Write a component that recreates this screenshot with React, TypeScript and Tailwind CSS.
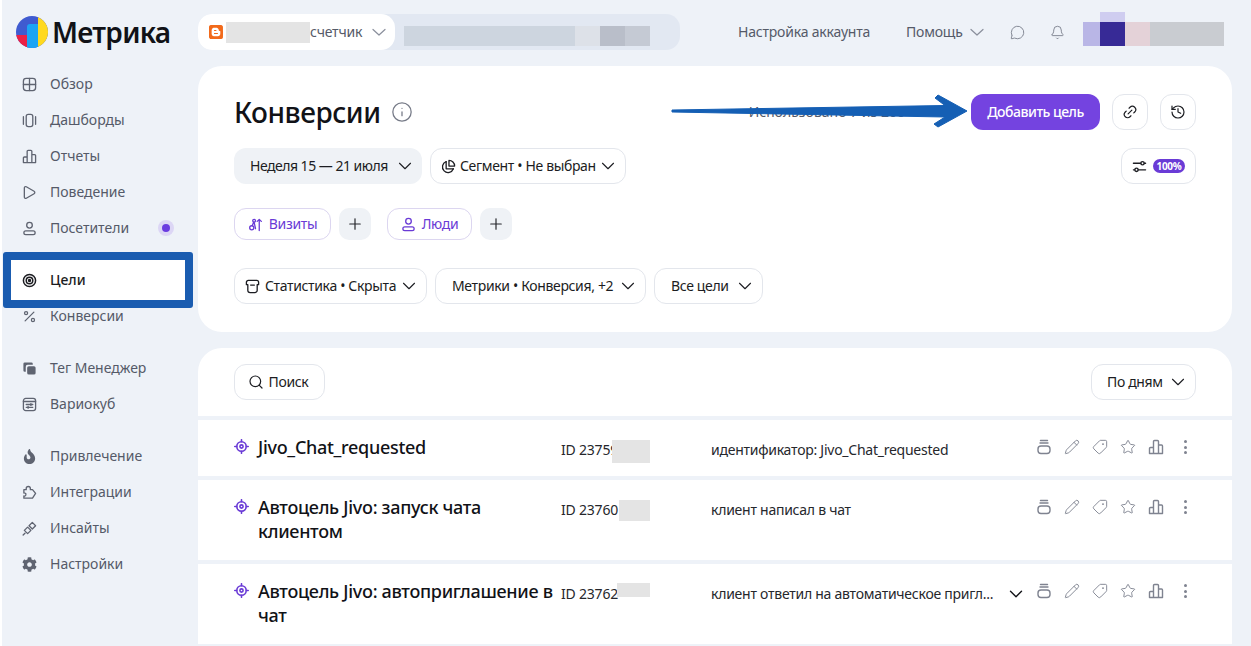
import { ChevronDown, Plus, Search, Link2, History, Bell, MessageCircle, Pencil, Tag, Star, Info, Percent } from 'lucide-react'
import { FaBlogger, FaCog, FaFire } from 'react-icons/fa'
import type { ReactNode } from 'react'

type IconProps = { className?: string }

// Small hand drawn icons that the packages do not have
const Svg = ({ className, children }: IconProps & { children: ReactNode }) => (
  <svg viewBox="0 0 16 16" fill="none" stroke="currentColor" strokeWidth={1.4} strokeLinecap="round" strokeLinejoin="round" className={className}>
    {children}
  </svg>
)

const GridIcon = ({ className }: IconProps) => (
  <Svg className={className}>
    <rect x="1.5" y="1.5" width="13" height="13" rx="3" />
    <path d="M8 1.5v13M1.5 8h13" />
  </Svg>
)
const DashIcon = ({ className }: IconProps) => (
  <Svg className={className}>
    <rect x="4.5" y="1.5" width="7" height="13" rx="2.2" />
    <path d="M1.5 4v8M14.5 4v8" />
  </Svg>
)
const BarsIcon = ({ className }: IconProps) => (
  <Svg className={className}>
    <path d="M1.5 14.5V9.5a1 1 0 0 1 1-1h3v6zM5.5 14.5V2.5a1 1 0 0 1 1-1h3a1 1 0 0 1 1 1v12zM10.500 14.500V6h3a1 1 0 0 1 1 1v7.500zM1.500 14.500h13" />
  </Svg>
)
const PlayIcon = ({ className }: IconProps) => (
  <Svg className={className}>
    <path d="M2.500 3.200c0-1.200 1-1.900 2.100-1.300l8.300 4.800c1 .6 1 2 0 2.600l-8.300 4.800c-1.100.6-2.100-.1-2.100-1.300z" />
  </Svg>
)
const PersonIcon = ({ className }: IconProps) => (
  <Svg className={className}>
    <circle cx="8" cy="4.500" r="3" />
    <rect x="2" y="10.500" width="12" height="4" rx="2" />
  </Svg>
)
const GoalIcon = ({ className }: IconProps) => (
  <svg viewBox="0 0 16 16" fill="none" stroke="currentColor" strokeWidth={1.6} className={className}>
    <circle cx="8" cy="8" r="6.500" />
    <circle cx="8" cy="8" r="3.500" />
    <circle cx="8" cy="8" r="1" fill="currentColor" />
  </svg>
)
const TagManagerIcon = ({ className }: IconProps) => (
  <svg viewBox="0 0 16 16" className={className} fill="currentColor">
    <path d="M3 1.500h7a1.500 1.500 0 0 1 1.500 1.500v1H6a2 2 0 0 0-2 2v5.500H3A1.500 1.500 0 0 1 1.500 10V3A1.500 1.500 0 0 1 3 1.500z" />
    <rect x="5.500" y="5.500" width="9" height="9" rx="1.800" />
  </svg>
)
const VarioIcon = ({ className }: IconProps) => (
  <Svg className={className}>
    <rect x="1.500" y="1.500" width="13" height="13" rx="2.500" />
    <path d="M1.500 4.800h13M4.500 8h7M4.500 11h7" />
    <path d="M9.500 7v2M6.500 10v2" />
  </Svg>
)
const PuzzleIcon = ({ className }: IconProps) => (
  <Svg className={className}>
    <path d="M4.500 5V3.800a2.200 2.200 0 0 1 4.400 0V5h2.300l3.300 4-3.300 5H2v-2.300a1.600 1.600 0 0 0 1.200-3 1.600 1.600 0 0 0-1.200-.2V5z" />
  </Svg>
)
const InsightIcon = ({ className }: IconProps) => (
  <Svg className={className}>
    <path d="M11 1.500l3.500 3.500L11 8.500 7.500 5zM6 6.500l3.500 3.500L6 13.500 2.500 10zM3.200 13L1.200 15" />
  </Svg>
)
const BasketIcon = ({ className }: IconProps) => (
  <Svg className={className}>
    <path d="M4.500 1.500h7M4 4h8" />
    <rect x="2" y="7" width="12" height="7.500" rx="3" />
  </Svg>
)
const VisitsIcon = ({ className }: IconProps) => (
  <Svg className={className}>
    <circle cx="4" cy="11.500" r="2.200" />
    <circle cx="6.500" cy="4" r="1.500" />
    <path d="M6 5.500L4.500 9.300M8 12.500L6.500 5.500M12 14.500V2.500M9.800 4.700L12 2.500l2.200 2.200" />
  </Svg>
)
const PieIcon = ({ className }: IconProps) => (
  <Svg className={className}>
    <path d="M5.500 2.800a6 6 0 1 0 7.700 7.700" />
    <path d="M8.500 1.500a6 6 0 0 1 6 6h-6z" />
    <path d="M5.500 2.800V10.500h7.700" />
  </Svg>
)
const StatsBoxIcon = ({ className }: IconProps) => (
  <Svg className={className}>
    <path d="M1.500 3.500a2 2 0 0 1 2-2h9a2 2 0 0 1 2 2V6H13v6a2.500 2.500 0 0 1-2.500 2.500h-5A2.500 2.500 0 0 1 3 12V6H1.500z" />
    <path d="M6 6.500h4" />
  </Svg>
)
const SlidersIcon = ({ className }: IconProps) => (
  <Svg className={className}>
    <path d="M1.500 4.500h8M13 4.500h1.500M1.500 11.500H3M6.500 11.500h8" />
    <circle cx="11.200" cy="4.500" r="1.800" />
    <circle cx="4.800" cy="11.500" r="1.800" />
  </Svg>
)
const TargetIcon = ({ className }: IconProps) => (
  <svg viewBox="0 0 16 16" fill="none" stroke="currentColor" strokeWidth={1.700} strokeLinecap="round" className={className}>
    <circle cx="8" cy="8" r="5" />
    <circle cx="8" cy="8" r="1.700" />
    <path d="M8 .8v2M8 13.200v2M.8 8h2M13.200 8h2" />
  </svg>
)

const Logo = () => (
  <svg viewBox="0 0 32 32" className="h-8 w-8 shrink-0">
    <clipPath id="logo-clip">
      <circle cx="16" cy="16" r="16" />
    </clipPath>
    <g clipPath="url(#logo-clip)">
      <rect width="32" height="32" fill="#3f5bd0" />
      <rect x="0" y="19" width="12" height="13" fill="#ec2146" />
      <rect x="22" y="0" width="10" height="32" fill="#ffd91f" />
      <path d="M11 11a3 3 0 0 1 3-3h8v24H11z" fill="#1ca4f5" />
    </g>
  </svg>
)

// Wide thin chevron used on every dropdown
const Caret = () => <ChevronDown className="h-[22px] w-[22px] shrink-0" strokeWidth={1.200} />
// The header one is flatter than the lucide chevron
const HeaderCaret = ({ className = '' }: IconProps) => (
  <svg viewBox="0 0 14 14" fill="none" stroke="#8a8f9c" strokeWidth={1.200} strokeLinecap="round" strokeLinejoin="round" className={`h-3.5 w-3.5 shrink-0 ${className}`}>
    <path d="M1 4.500L7 10L13 4.500" />
  </svg>
)

const navGroups = [
  [
    { label: 'Обзор', icon: GridIcon },
    { label: 'Дашборды', icon: DashIcon },
    { label: 'Отчеты', icon: BarsIcon },
    { label: 'Поведение', icon: PlayIcon },
    { label: 'Посетители', icon: PersonIcon, dot: true },
  ],
  [
    { label: 'Цели', icon: GoalIcon, active: true },
    { label: 'Конверсии', icon: Percent },
  ],
  [
    { label: 'Тег Менеджер', icon: TagManagerIcon },
    { label: 'Вариокуб', icon: VarioIcon },
  ],
  [
    { label: 'Привлечение', icon: FaFire },
    { label: 'Интеграции', icon: PuzzleIcon },
    { label: 'Инсайты', icon: InsightIcon },
    { label: 'Настройки', icon: FaCog },
  ],
]

// The blur patches lie over the last digits of the id, as in the redacted screenshot
const goals = [
  { title: 'Jivo_Chat_requested', id: 'ID 23759', blur: 'left-[51px] top-1 w-[38px] h-[23px]', desc: 'идентификатор: Jivo_Chat_requested' },
  { title: 'Автоцель Jivo: запуск чата клиентом', id: 'ID 23760', blur: 'left-[58px] top-1 w-[31px] h-[21px]', desc: 'клиент написал в чат' },
  { title: 'Автоцель Jivo: автоприглашение в чат', id: 'ID 23762', blur: 'left-[56px] top-[3px] w-[33px] h-[14px]', desc: 'клиент ответил на автоматическое пригл...', more: true },
]

const Chip = ({ children, className = '' }: { children: ReactNode; className?: string }) => (
  <button className={`flex h-9 items-center whitespace-nowrap rounded-xl border border-[#e3e6ec] bg-white text-sm tracking-[-0.35px] text-[#1c1d22] ${className}`}>
    {children}
  </button>
)

const PlusButton = () => (
  <button className="flex h-8 w-8 items-center justify-center rounded-[10px] bg-[#eff2f6] text-[#26272c]">
    <Plus className="h-[18px] w-[18px]" strokeWidth={1.600} />
  </button>
)

function Sidebar() {
  return (
    <aside className="flex w-[196px] shrink-0 flex-col gap-4">
      {navGroups.map((group, i) => (
        <ul key={i}>
          {group.map((item) => {
            const Icon = item.icon
            return (
              <li key={item.label} className={`relative flex h-9 items-center pl-5 text-sm ${item.active ? 'font-medium text-[#1c1d22]' : 'text-[#555a68]'}`}>
                {item.active && <span className="absolute left-px top-[-10px] h-[56px] w-[190px] rounded-[3px] border-[8px] border-[#1a5cb0] bg-white" />}
                <Icon className={`relative h-[15px] w-[15px] ${item.active ? 'text-[#1c1d22]' : 'text-[#5f6471]'}`} />
                <span className="relative ml-[13px]">{item.label}</span>
                {item.dot && (
                  <span className="ml-[29px] flex h-4 w-4 items-center justify-center rounded-full bg-[#dcd6f5]">
                    <span className="h-2 w-2 rounded-full bg-[#6a3be0]" />
                  </span>
                )}
              </li>
            )
          })}
        </ul>
      ))}
    </aside>
  )
}

function Header() {
  return (
    <header className="flex h-[66px] shrink-0 items-center pb-[2px]">
      <div className="flex w-[196px] shrink-0 items-center gap-1 pl-[14px]">
        <Logo />
        <span className="text-[28px] font-semibold leading-none tracking-[-0.7px] text-[#111217]">Метрика</span>
      </div>
      <div className="flex h-9 w-[482px] items-center rounded-[14px] bg-[#e2e8f2]">
        <div className="flex h-9 w-[197px] items-center rounded-[14px] bg-white pl-[10px] text-sm text-[#555a68]">
          <FaBlogger className="h-4 w-4 shrink-0 text-[#f26a1b]" />
          <span className="ml-[2px] h-[21px] w-[84px] bg-[#e4e4e4]" />
          <span className="tracking-[-0.2px]">счетчик</span>
          <HeaderCaret className="ml-[10px]" />
        </div>
        <div className="ml-[9px] mt-2 flex h-5 items-center">
          <span className="h-5 w-[171px] bg-[#cdd5df]" />
          <span className="h-5 w-[25px] bg-[#dde1e8]" />
          <span className="h-5 w-[25px] bg-[#b9bec9]" />
          <span className="h-5 w-[25px] bg-[#c5cad4]" />
        </div>
      </div>
      <div className="ml-[58px] flex items-center text-sm tracking-[-0.2px] text-[#555a68]">
        <span className="w-[132px] whitespace-nowrap">Настройка аккаунта</span>
        <span className="ml-9 w-[55px]">Помощь</span>
        <HeaderCaret className="ml-[9px]" />
        <MessageCircle strokeWidth={1.300} className="ml-[26px] h-[15px] w-[15px] text-[#6e7280]" />
        <Bell strokeWidth={1.300} className="ml-[25px] h-[15px] w-[15px] text-[#6e7280]" />
        <div className="ml-[18px] mt-1 flex h-6 items-center">
          <span className="h-6 w-[17px] bg-[#b9b6e6]" />
          <span className="relative h-6 w-[25px] bg-[#372a96]">
            <span className="absolute -top-[10px] left-0 h-[10px] w-[25px] bg-[#cfcdf0]" />
          </span>
          <span className="h-6 w-[25px] bg-[#e4d2d8]" />
          <span className="h-6 w-[74px] bg-[#c9ccd1]" />
        </div>
      </div>
    </header>
  )
}

function ConversionsCard() {
  return (
    <section className="h-[266px] rounded-3xl bg-white px-9 pt-7">
      <div className="flex h-9 items-center">
        <h1 className="text-[28px] font-medium leading-9 tracking-[-0.45px] text-[#111217]">Конверсии</h1>
        <Info strokeWidth={1.400} className="ml-[10px] h-[22px] w-[22px] text-[#777b88]" />
        <span className="ml-auto mr-[66px] whitespace-nowrap text-sm text-[#555a68]">Использовано 7 из 200</span>
        <button className="flex h-9 w-[129px] items-center justify-center whitespace-nowrap rounded-xl bg-[#7443e0] text-sm font-medium tracking-[-0.5px] text-white">Добавить цель</button>
        <Chip className="ml-3 w-9 justify-center"><Link2 className="h-4 w-4 -rotate-45" strokeWidth={1.800} /></Chip>
        <Chip className="ml-3 w-9 justify-center"><History className="h-4 w-4" strokeWidth={1.800} /></Chip>
      </div>
      <div className="mt-[18px] flex items-center gap-2">
        <button className="flex h-9 w-[188px] items-center justify-between whitespace-nowrap rounded-xl bg-[#eff2f6] pl-4 pr-[6px] text-sm tracking-[-0.5px] text-[#1c1d22]">
          Неделя 15 — 21 июля <Caret />
        </button>
        <Chip className="w-[196px] justify-between pl-2.5 pr-[6px]">
          <span className="flex items-center gap-1"><PieIcon className="h-[15px] w-[15px]" />Сегмент • Не выбран</span>
          <Caret />
        </Chip>
        <Chip className="ml-auto w-[75px] justify-center gap-[6px]">
          <SlidersIcon className="h-[15px] w-[15px]" />
          <span className="rounded-full bg-[#6a3bd6] px-1 text-[10px] font-bold leading-[14px] text-white">100%</span>
        </Chip>
      </div>
      <div className="mt-6 flex items-center gap-2">
        <button className="flex h-8 w-[97px] items-center justify-center gap-[6px] rounded-xl border border-[#dcd6f0] text-sm tracking-[-0.35px] text-[#6a3bd6]"><VisitsIcon className="h-[15px] w-[15px]" />Визиты</button>
        <PlusButton />
        <button className="ml-2 flex h-8 w-[85px] items-center justify-center gap-[6px] rounded-xl border border-[#dcd6f0] text-sm tracking-[-0.35px] text-[#6a3bd6]"><PersonIcon className="h-[15px] w-[15px]" />Люди</button>
        <PlusButton />
      </div>
      <div className="mt-7 flex items-center gap-2">
        <Chip className="w-[193px] justify-between pl-2.5 pr-[6px]">
          <span className="flex items-center gap-[5px]"><StatsBoxIcon className="h-[15px] w-[15px]" />Статистика • Скрыта</span>
          <Caret />
        </Chip>
        <Chip className="w-[211px] justify-between pl-4 pr-[6px]">
          Метрики • Конверсия, +2 <Caret />
        </Chip>
        <Chip className="w-[109px] justify-between pl-4 pr-[6px]">
          Все цели <Caret />
        </Chip>
      </div>
    </section>
  )
}

function GoalRow({ goal }: { goal: (typeof goals)[number] }) {
  return (
    <div className="flex bg-white pb-4 pl-9 pr-9 pt-4">
      <TargetIcon className="mt-[3px] h-[15px] w-[15px] shrink-0 text-[#6a3bd6]" />
      <h3 className="ml-[9px] w-[303px] shrink-0 -translate-y-px text-lg font-medium leading-6 tracking-[-0.3px] text-[#111217]">{goal.title}</h3>
      <div className="relative flex h-6 w-[150px] shrink-0 items-center pt-1 text-sm tracking-[-0.2px] text-[#26272c]">
        <span>{goal.id}</span>
        <span className={`absolute bg-[#e4e4e4] ${goal.blur}`} />
      </div>
      <div className="flex h-6 w-[282px] shrink-0 items-center whitespace-nowrap pt-1 text-sm tracking-[-0.25px] text-[#26272c]">
        {goal.desc}
      </div>
      <div className="flex h-6 w-[43px] shrink-0 items-center justify-center pl-[2px] pt-1 text-[#111217]">
        {goal.more && <ChevronDown className="h-[22px] w-[22px]" strokeWidth={1.500} />}
      </div>
      <div className="flex h-6 items-center gap-3 pb-[2px] text-[#7f8390]">
        <BasketIcon className="h-4 w-4" />
        <Pencil strokeWidth={1.400} className="h-4 w-4" />
        <Tag strokeWidth={1.400} className="h-4 w-4 rotate-90" />
        <Star strokeWidth={1.400} className="h-4 w-4" />
        <BarsIcon className="h-4 w-4" />
        <span className="ml-1.5 flex h-4 w-[6px] flex-col items-center justify-between py-[1px]">
          <span className="h-[3px] w-[3px] rounded-full bg-current" />
          <span className="h-[3px] w-[3px] rounded-full bg-current" />
          <span className="h-[3px] w-[3px] rounded-full bg-current" />
        </span>
      </div>
    </div>
  )
}

function GoalsCard() {
  return (
    <section className="flex flex-col gap-1">
      <div className="flex h-[68px] items-start justify-between rounded-t-3xl bg-white px-9 pt-4">
        <Chip className="w-[91px] justify-center gap-[5px] pr-[3px]"><Search className="h-4 w-4" strokeWidth={1.800} />Поиск</Chip>
        <Chip className="w-[105px] justify-between pl-[15px] pr-[6px]">По дням <Caret /></Chip>
      </div>
      {goals.map((goal) => <GoalRow key={goal.id} goal={goal} />)}
    </section>
  )
}

export default function App() {
  return (
    <div className="relative flex h-[646px] flex-col overflow-hidden border-l-2 border-white bg-[#eef2f8] font-['Noto_Sans',sans-serif]">
      <Header />
      <div className="flex min-h-0 flex-1">
        <Sidebar />
        <main className="flex w-[1034px] shrink-0 flex-col gap-4">
          <ConversionsCard />
          <GoalsCard />
        </main>
      </div>
      {/* Callout arrow pasted over the screenshot */}
      <svg viewBox="0 0 300 36" className="absolute left-[669px] top-[94px] h-9 w-[300px]">
        <path d="M1 16L274 11.500L264 4L267 1L296 17L267 33L263 30L274 23L1 18Z" fill="#155fb4" stroke="#155fb4" strokeLinejoin="round" />
      </svg>
    </div>
  )
}
